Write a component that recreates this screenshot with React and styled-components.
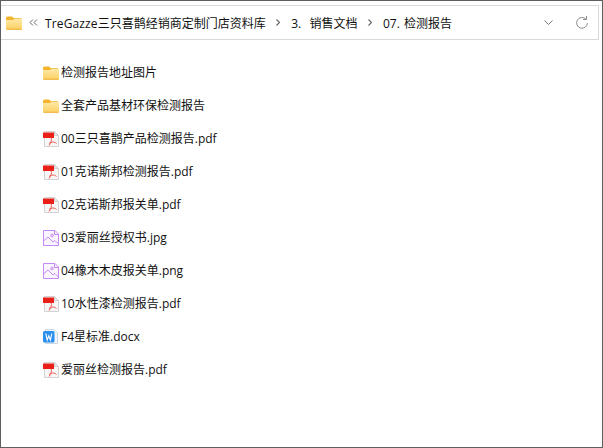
import React from "react";
import styled, { createGlobalStyle } from "styled-components";

const GlobalStyle = createGlobalStyle`
  html, body {
    margin: 0;
    padding: 0;
    background: #fff;
  }
`;

const crumbs = ["三只喜鹊经销商定制门店资料库", "3.  销售文档", "07. 检测报告"];

const files = [
  { type: "folder", name: "检测报告地址图片" },
  { type: "folder", name: "全套产品基材环保检测报告" },
  { type: "pdf", name: "00三只喜鹊产品检测报告.pdf" },
  { type: "pdf", name: "01克诺斯邦检测报告.pdf" },
  { type: "pdf", name: "02克诺斯邦报关单.pdf" },
  { type: "image", name: "03爱丽丝授权书.jpg" },
  { type: "image", name: "04橡木木皮报关单.png" },
  { type: "pdf", name: "10水性漆检测报告.pdf" },
  { type: "word", name: "F4星标准.docx" },
  { type: "pdf", name: "爱丽丝检测报告.pdf" },
];

function FolderIcon({ id }) {
  return (
    <svg width="16" height="16" viewBox="0 0 16 16">
      <defs>
        <linearGradient id={id} x1="0" y1="0" x2="0" y2="1">
          <stop offset="0" stopColor="#ffe9a6" />
          <stop offset="1" stopColor="#fbd061" />
        </linearGradient>
      </defs>
      <path d="M0 3 Q0 1.5 1.5 1.5 H6 L8 3.3 H14.5 Q16 3.3 16 4.8 V6 H0 Z" fill="#f4b52c" />
      <path d="M0 5 H7 L8.5 4 H16 V13.5 Q16 14.8 14.7 14.8 H1.3 Q0 14.8 0 13.5 Z" fill={`url(#${id})`} />
      <path d="M0 13.8 H16 Q16 14.8 14.7 14.8 H1.3 Q0 14.8 0 13.8 Z" fill="#efb13a" />
    </svg>
  );
}

function PdfIcon() {
  return (
    <svg width="16" height="16" viewBox="0 0 16 16">
      <path d="M1.5 0.5 H11.5 L15.5 4.5 V15.5 H1.5 Z" fill="#f7f7f7" stroke="#d2d2d2" />
      <path d="M11.5 0.5 V4.5 H15.5 Z" fill="#e6e6e6" stroke="#d2d2d2" />
      <rect x="0" y="1.5" width="11" height="5.5" fill="#ea1f17" />
      <path d="M6 14.5 C8 12 9 9 8.2 6.5 M6 12.5 C8.5 10.5 11.5 10.5 13.5 12.5" fill="none" stroke="#ee5a52" />
    </svg>
  );
}

function ImageIcon() {
  return (
    <svg width="16" height="16" viewBox="0 0 16 16">
      <path d="M0.5 0.5 H12 L15.5 4 V15.5 H0.5 Z" fill="#fbf5ff" stroke="#c58af5" />
      <path d="M11.5 0.5 V4.5 H15.5" fill="none" stroke="#c58af5" />
      <circle cx="9" cy="5.5" r="1.4" fill="#e6ccfb" stroke="#c58af5" strokeWidth="0.8" />
      <path d="M0.5 11 L5 7 L10 12 L12 10.5 L15.5 14" fill="none" stroke="#c58af5" />
    </svg>
  );
}

function WordIcon() {
  return (
    <svg width="16" height="16" viewBox="0 0 16 16">
      <path d="M2.5 0.5 H11 L14.5 4 V14.5 H2.5 Z" fill="#f2f6fb" stroke="#cbd6e2" />
      <rect x="0" y="2" width="11.5" height="11.5" rx="1.5" fill="#2b8ff0" />
      <path d="M2.8 4.5 L4.2 11 L5.8 6.8 L7.4 11 L8.8 4.5" fill="none" stroke="#fff" strokeWidth="1.1" />
    </svg>
  );
}

function renderIcon(type, key) {
  if (type === "folder") return <FolderIcon id={`folder-${key}`} />;
  if (type === "pdf") return <PdfIcon />;
  if (type === "image") return <ImageIcon />;
  return <WordIcon />;
}

function App() {
  return (
    <Window>
      <GlobalStyle />
      <AddressBar>
        <FolderIcon id="folder-bar" />
        <Overflow>
          <svg width="9" height="7" viewBox="0 0 9 7">
            <path d="M4 0.5 L1 3.5 L4 6.5 M8 0.5 L5 3.5 L8 6.5" fill="none" stroke="#666" />
          </svg>
        </Overflow>
        <Crumbs>
          <span>
            <Latin>TreGazze</Latin>
            {crumbs[0]}
          </span>
          {crumbs.slice(1).map((crumb) => (
            <React.Fragment key={crumb}>
              <Sep>
                <svg width="4" height="7" viewBox="0 0 4 7">
                  <path d="M0.5 0.5 L3.5 3.5 L0.5 6.5" fill="none" stroke="#666" strokeWidth="1.2" />
                </svg>
              </Sep>
              <span>{crumb}</span>
            </React.Fragment>
          ))}
        </Crumbs>
        <BarButtons>
          <svg width="9" height="5" viewBox="0 0 9 5">
            <path d="M0.5 0.5 L4.5 4.5 L8.5 0.5" fill="none" stroke="#777" />
          </svg>
          <svg width="12" height="13" viewBox="0 0 12 13">
            <path d="M9.8 3 A5.4 5.4 0 1 0 11.4 7" fill="none" stroke="#8a8a8a" />
            <path d="M10.5 0 V3.5 H7" fill="none" stroke="#8a8a8a" />
          </svg>
        </BarButtons>
      </AddressBar>
      <FileList>
        {files.map((file) => (
          <FileRow key={file.name}>
            {renderIcon(file.type, file.name)}
            <FileName>{file.name}</FileName>
          </FileRow>
        ))}
      </FileList>
    </Window>
  );
}

export default App;

const Window = styled.div`
  box-sizing: border-box;
  width: 603px;
  height: 448px;
  border: 1px solid #5f5f5f;
  background: #fff;
  padding-top: 4px;
  font-family: "Open Sans", "Noto Sans CJK SC", sans-serif;
  font-size: 12px;
  color: #111;
`;

const AddressBar = styled.div`
  box-sizing: border-box;
  display: flex;
  align-items: center;
  width: 598px;
  height: 35px;
  padding-left: 5px;
  border-top: 1px solid #d9d9d9;
  border-bottom: 1px solid #d9d9d9;
  border-right: 1px solid #d9d9d9;
`;

const Overflow = styled.span`
  display: flex;
  width: 9px;
  margin-left: 7px;
  margin-right: 7px;
`;

const Crumbs = styled.div`
  display: flex;
  align-items: center;
  flex: 1;
  white-space: pre;
  word-spacing: 1px;
`;

const Latin = styled.span`
  letter-spacing: 0.13px;
`;

const Sep = styled.span`
  display: flex;
  margin: 0 11px 0 10.5px;
`;

const BarButtons = styled.div`
  display: flex;
  align-items: center;
  gap: 23px;
  margin-right: 10px;
`;

const FileList = styled.div`
  display: flex;
  flex-direction: column;
  gap: 13px;
  padding: 23px 0 0 42px;
`;

const FileRow = styled.div`
  display: flex;
  align-items: center;
  gap: 2px;
  height: 20px;
`;

const FileName = styled.span`
  line-height: 20px;
`;
